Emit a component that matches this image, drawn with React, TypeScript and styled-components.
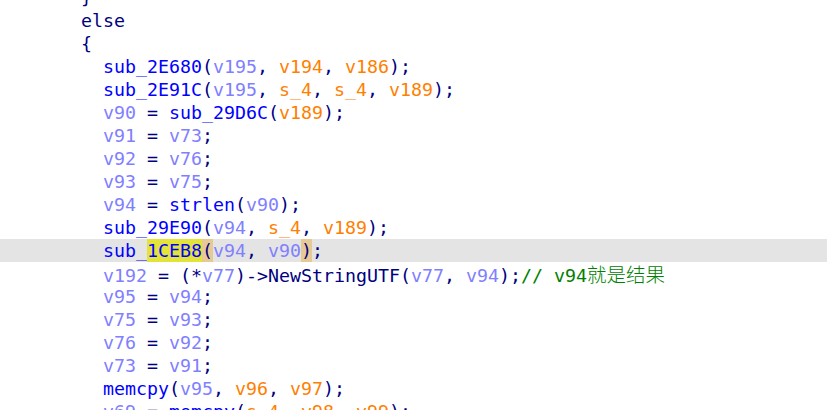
import React from "react";
import styled, { createGlobalStyle, css } from "styled-components";

const Global = createGlobalStyle`
  html, body {
    margin: 0;
    padding: 0;
    background: #ffffff;
  }
  body {
    overflow: hidden;
  }
`;

type Kind = "n" | "f" | "v" | "o" | "c" | "cjk";

const colors: Record<Kind, string> = {
  n: "#000080",
  f: "#0000ff",
  v: "#8080ff",
  o: "#ff8000",
  c: "#008000",
  cjk: "#008000",
};

const Page = styled.div`
  width: 827px;
  height: 410px;
  overflow: hidden;
  background: #ffffff;
`;

const Listing = styled.div`
  margin-top: -14px;
  display: flex;
  flex-direction: column;
`;

const Line = styled.div<{ $current?: boolean; $depth: number }>`
  height: 23px;
  line-height: 23px;
  white-space: pre;
  padding-left: ${(p) => 81 + p.$depth * 22}px;
  font-family: "DejaVu Sans Mono", "Liberation Mono", monospace;
  font-size: 18.27px;
  background: ${(p) => (p.$current ? "#e4e4e4" : "transparent")};
`;

const Tok = styled.span<{ $k: Kind; $mark?: "word" | "paren" }>`
  color: ${(p) => colors[p.$k]};
  ${(p) =>
    p.$k === "cjk" &&
    css`
      font-family: "Noto Sans CJK SC", sans-serif;
      font-size: 19.5px;
      font-weight: 300;
    `}
  ${(p) =>
    p.$mark &&
    css`
      display: inline-block;
      height: 23px;
      vertical-align: top;
      background: ${p.$mark === "word" ? "#e3e33a" : "#e6c994"};
    `}
`;

const Caret = styled.span`
  display: inline-block;
  width: 2px;
  height: 19px;
  margin-right: -2px;
  vertical-align: -4px;
  background: #000000;
`;

type T = [string, Kind, ("word" | "paren")?] | "caret";

const L = (depth: number, toks: T[], current = false) => ({ depth, toks, current });

const lines = [
  L(0, [["}", "n"]]),
  L(0, [["else", "n"]]),
  L(0, [["{", "n"]]),
  L(1, [["sub_2E680", "f"], ["(", "n"], ["v195", "v"], [", ", "n"], ["v194", "o"], [", ", "n"], ["v186", "o"], [");", "n"]]),
  L(1, [["sub_2E91C", "f"], ["(", "n"], ["v195", "v"], [", ", "n"], ["s_4", "o"], [", ", "n"], ["s_4", "o"], [", ", "n"], ["v189", "o"], [");", "n"]]),
  L(1, [["v90", "v"], [" = ", "n"], ["sub_29D6C", "f"], ["(", "n"], ["v189", "o"], [");", "n"]]),
  L(1, [["v91", "v"], [" = ", "n"], ["v73", "v"], [";", "n"]]),
  L(1, [["v92", "v"], [" = ", "n"], ["v76", "v"], [";", "n"]]),
  L(1, [["v93", "v"], [" = ", "n"], ["v75", "v"], [";", "n"]]),
  L(1, [["v94", "v"], [" = ", "n"], ["strlen", "f"], ["(", "n"], ["v90", "v"], [");", "n"]]),
  L(1, [["sub_29E90", "f"], ["(", "n"], ["v94", "v"], [", ", "n"], ["s_4", "o"], [", ", "n"], ["v189", "o"], [");", "n"]]),
  L(
    1,
    [["sub_", "f"], ["1CEB8", "f", "word"], "caret", ["(", "n", "paren"], ["v94", "v"], [", ", "n"], ["v90", "v"], [")", "n", "paren"], [";", "n"]],
    true
  ),
  L(1, [
    ["v192", "v"], [" = (*", "n"], ["v77", "v"], [")->NewStringUTF(", "n"], ["v77", "v"], [", ", "n"], ["v94", "v"], [");", "n"],
    ["// v94", "c"], ["就是结果", "cjk"],
  ]),
  L(1, [["v95", "v"], [" = ", "n"], ["v94", "v"], [";", "n"]]),
  L(1, [["v75", "v"], [" = ", "n"], ["v93", "v"], [";", "n"]]),
  L(1, [["v76", "v"], [" = ", "n"], ["v92", "v"], [";", "n"]]),
  L(1, [["v73", "v"], [" = ", "n"], ["v91", "v"], [";", "n"]]),
  L(1, [["memcpy", "f"], ["(", "n"], ["v95", "v"], [", ", "n"], ["v96", "o"], [", ", "n"], ["v97", "o"], [");", "n"]]),
  L(1, [["v69", "v"], [" = ", "n"], ["memcpy", "f"], ["(", "n"], ["s_4", "o"], [", ", "n"], ["v98", "o"], [", ", "n"], ["v99", "o"], [");", "n"]]),
];

export default function App() {
  return (
    <Page>
      <Global />
      <Listing>
        {lines.map((ln, i) => (
          <Line key={i} $depth={ln.depth} $current={ln.current}>
            {ln.toks.map((t, j) =>
              t === "caret" ? (
                <Caret key={j} />
              ) : (
                <Tok key={j} $k={t[1]} $mark={t[2]}>
                  {t[0]}
                </Tok>
              )
            )}
          </Line>
        ))}
      </Listing>
    </Page>
  );
}
